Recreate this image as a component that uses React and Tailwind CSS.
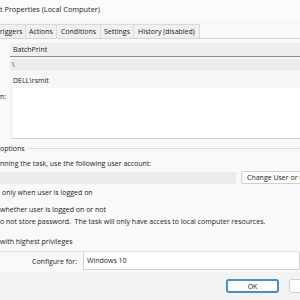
export default function App() {
  const tabs = [
    { label: "riggers", w: "w-[26px]", pad: "justify-start pl-0" },
    { label: "Actions", w: "w-[31px]", pad: "justify-center" },
    { label: "Conditions", w: "w-[44px]", pad: "justify-center" },
    { label: "Settings", w: "w-[33px]", pad: "justify-center" },
    { label: "History (disabled)", w: "w-[66px]", pad: "justify-center" },
  ];

  return (
    <div className="w-[300px] h-[300px] overflow-hidden bg-[#f9f9f9] text-[#1b1b1b] font-['Open_Sans',sans-serif] text-[7px] leading-none flex flex-col whitespace-nowrap">
      {/* Title bar */}
      <div className="h-[20px] shrink-0 flex items-center bg-[#fbfbfb] text-[7.3px] text-[#222]">
        t Properties (Local Computer)
      </div>

      {/* Tab strip */}
      <div className="h-[19px] shrink-0 flex items-end bg-[#f9f9f9] border-b border-[#d6d6d6]">
        {tabs.map((t) => (
          <div
            key={t.label}
            className={`${t.w} h-[14px] shrink-0 flex items-center ${t.pad} bg-[#f0f0f0] border-t border-r border-[#dadada]`}
          >
            {t.label}
          </div>
        ))}
      </div>

      {/* General panel */}
      <div className="flex flex-col">
        <div className="mt-[4px] ml-[10px] h-[14px] flex items-center pl-[3px] bg-[#efefef] border-b border-[#8c8c8c]">
          BatchPrint
        </div>
        <div className="mt-[2px] ml-[10px] h-[11px] flex items-center pl-[2px] bg-[#ececec]">
          \
        </div>
        <div className="ml-[10px] h-[18px] flex items-center pl-[3px] pt-[3px] bg-[#f6f6f6]">
          DELL\rsmit
        </div>
        <div className="h-[51px] flex">
          <div className="w-[11px] shrink-0 pt-[5px]">n:</div>
          <div className="flex-1 bg-white border-b border-l border-[#d4d4d4] border-l-[#ececec]"></div>
        </div>

        {/* Security options group */}
        <div className="mt-[3px] h-[12px] flex items-center">
          <span>options</span>
          <div className="flex-1 ml-[3px] h-px bg-[#dcdcdc]"></div>
        </div>
        <div className="mt-[3px] h-[12px] flex items-center">
          nning the task, use the following user account:
        </div>
        <div className="mt-[2px] h-[13px] flex items-center">
          <div className="w-[236px] shrink-0 h-[12px] bg-[#ececec]"></div>
          <div className="ml-[5px] w-[90px] shrink-0 h-[13px] flex items-center pl-[5px] bg-[#fdfdfd] border border-[#d0d0d0] rounded-[2px]">
            Change User or Group...
          </div>
        </div>
        <div className="mt-[2px] h-[12px] flex items-center pl-[2px]">
          only when user is logged on
        </div>
        <div className="mt-[5px] h-[12px] flex items-center">
          whether user is logged on or not
        </div>
        <div className="h-[12px] flex items-center">
          o not store password.&nbsp; The task will only have access to local computer resources.
        </div>
        <div className="mt-[8px] h-[12px] flex items-center">
          with highest privileges
        </div>
        <div className="mt-[4px] h-px bg-[#e0e0e0]"></div>
        <div className="h-[18px] flex items-center">
          <div className="w-[83px] shrink-0 flex justify-end pr-[6px]">Configure for:</div>
          <div className="flex-1 h-[18px] flex items-center pl-[3px] bg-white border border-[#d2d2d2] border-t-0">
            Windows 10
          </div>
        </div>
      </div>

      {/* Footer buttons */}
      <div className="mt-[2px] flex-1 bg-[#f3f3f3] flex items-start pt-[7px] pl-[226px]">
        <div className="w-[53px] h-[14px] shrink-0 flex items-center justify-center bg-[#fdfdfd] border-2 border-[#4a8fc2] rounded-[3px]">
          OK
        </div>
        <div className="ml-[10px] w-[64px] h-[14px] shrink-0 flex items-center justify-center bg-[#fdfdfd] border border-[#d0d0d0] rounded-[3px]">
          Cancel
        </div>
      </div>
    </div>
  );
}
